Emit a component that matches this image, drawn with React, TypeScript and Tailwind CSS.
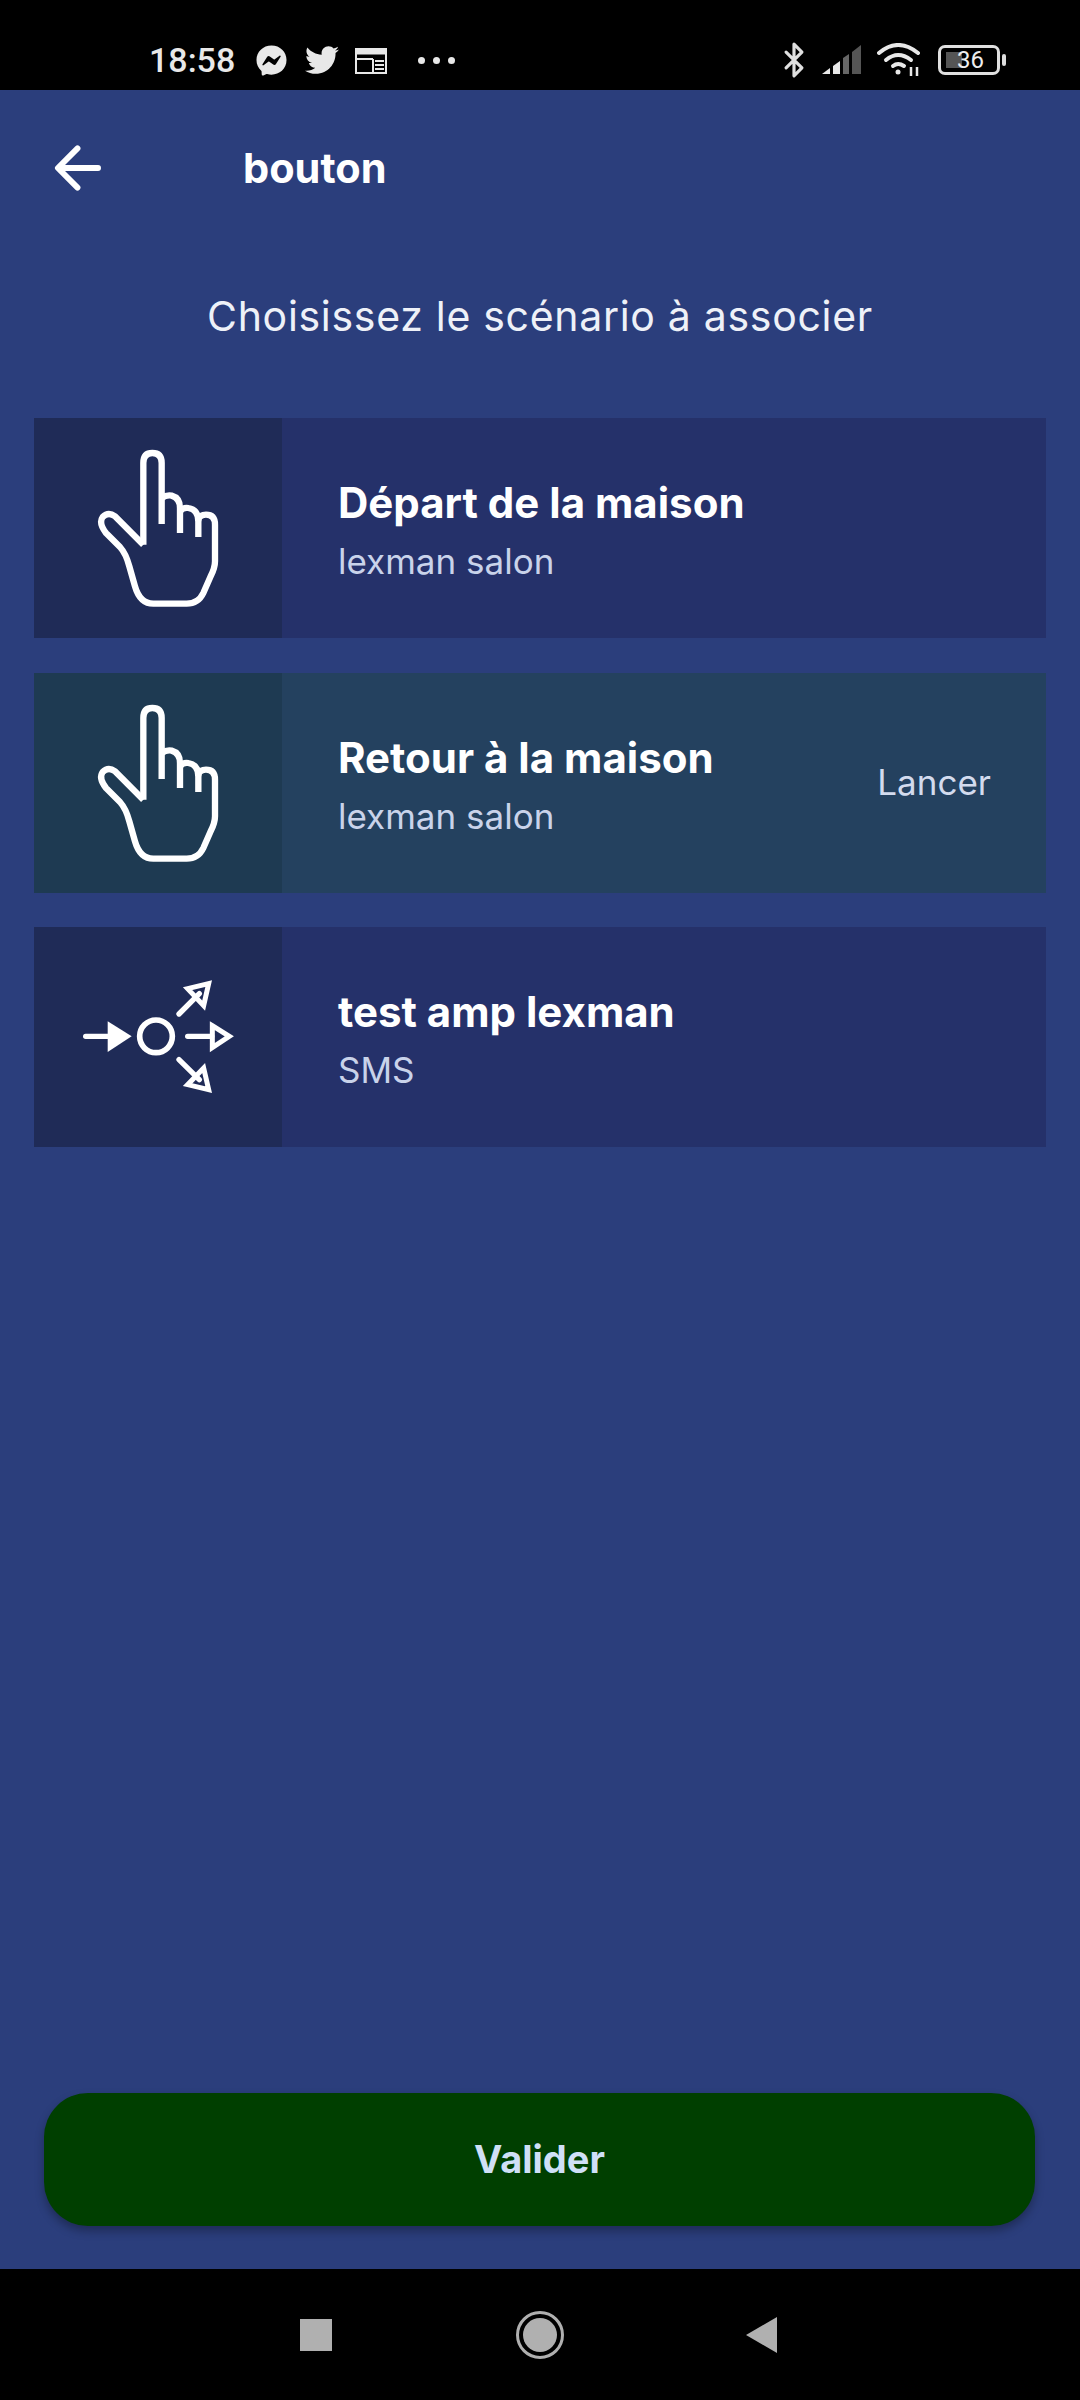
import { Bluetooth } from "lucide-react";
import { FaFacebookMessenger, FaTwitter } from "react-icons/fa";

function HandIcon() {
  return (
    <svg width="248" height="220" viewBox="42 25 744 660" fill="none" stroke="white" strokeWidth="19" strokeLinecap="butt" strokeLinejoin="round">
      <path d="M370 405V160Q370 130 397 130Q425 130 425 160V343" />
      <path d="M370 405L285 320Q265 305 248 322Q235 340 258 370L300 412Q318 432 328 470L345 530Q360 582 400 582H500Q535 582 550 550L572 500Q585 475 585 455V345Q585 315 558 315Q540 315 535 330V382" />
      <path d="M425 265Q440 255 455 258Q480 265 480 295V370" />
      <path d="M480 305Q490 292 505 295Q535 300 535 335" />
    </svg>
  );
}

function SplitIcon() {
  return (
    <svg width="248" height="220" viewBox="42 22 744 660" fill="none" stroke="white" strokeWidth="16" strokeLinecap="round" strokeLinejoin="miter">
      <path d="M197 350H265" />
      <path d="M263 305L335 350L263 397Z" fill="white" stroke="none" />
      <circle cx="408" cy="350" r="49" strokeWidth="17" />
      <path d="M503 350H575" />
      <path d="M577 318L628 350L577 384Z" strokeWidth="15" />
      <path d="M477 283L538 222" />
      <path d="M503 207L566 192L551 258Z" strokeWidth="15" />
      <path d="M477 420L538 480" />
      <path d="M503 495L566 510L551 445Z" strokeWidth="15" />
    </svg>
  );
}

function ScenarioRow({ title, sub, action, selected, icon }: { title: string; sub: string; action?: string; selected?: boolean; icon: React.ReactNode }) {
  return (
    <div className={selected ? "flex h-[220px] bg-[#24415f]" : "flex h-[220px] bg-[#25316a]"}>
      <div className={selected ? "flex w-[248px] items-center justify-center bg-[#1e3a52]" : "flex w-[248px] items-center justify-center bg-[#1f2b57]"}>
        {icon}
      </div>
      <div className="flex flex-1 items-center pl-[56px] pr-[55px]">
        <div className="flex-1 pt-[5px]">
          <div className="text-[42px] leading-[50px] font-bold text-white">{title}</div>
          <div className="mt-[11px] text-[35px] leading-[44px] text-[#c9d3ea]">{sub}</div>
        </div>
        {action && <div className="text-[35px] text-[#d3dbee]">{action}</div>}
      </div>
    </div>
  );
}

export default function App() {
  return (
    <div className="flex h-[2400px] w-[1080px] flex-col bg-[#2b3e7c] font-['Inter',sans-serif]">
      <div className="flex h-[90px] items-center justify-between bg-black pt-[30px] pl-[149px] pr-[74px] font-['Roboto',sans-serif] text-[#e8e8e8]">
        <div className="flex items-center">
          <span className="w-[92px] text-[34px] font-medium">18:58</span>
          <FaFacebookMessenger className="ml-[15px] text-[31px]" />
          <FaTwitter className="ml-[18px] text-[34px]" />
          <svg className="ml-[16px]" width="32" height="28" viewBox="0 0 32 28" fill="none" stroke="#e8e8e8" strokeWidth="2">
            <path d="M1 3H31V27H1Z" />
            <path d="M1 6H31" strokeWidth="5" />
            <path d="M1 13H18M18 13V27M20 15H29M20 19H29M20 23H29" />
          </svg>
          <div className="ml-[31px] flex gap-[8px]">
            <div className="h-[7px] w-[7px] rounded-full bg-[#e8e8e8]" />
            <div className="h-[7px] w-[7px] rounded-full bg-[#e8e8e8]" />
            <div className="h-[7px] w-[7px] rounded-full bg-[#e8e8e8]" />
          </div>
        </div>
        <div className="flex items-center">
          <Bluetooth size={38} strokeWidth={2} className="text-[#e0e0e0]" />
          <svg className="ml-[8px]" width="42" height="32" viewBox="0 0 42 32">
            <path d="M1 30L9 24V30Z" fill="#e8e8e8" />
            <path d="M12 22L19 17V30H12Z" fill="#e8e8e8" />
            <path d="M22 14L28 10V30H22Z" fill="#666" />
            <path d="M31 8L40 1V30H31Z" fill="#555" />
          </svg>
          <svg className="ml-[14px]" width="46" height="34" viewBox="0 0 46 34" fill="none" stroke="#e8e8e8" strokeWidth="4" strokeLinecap="round">
            <path d="M2 10Q21 -6 41 10" />
            <path d="M9 17Q21 7 34 17" />
            <path d="M16 23Q21 19 27 23" />
            <circle cx="21" cy="29" r="2.5" fill="#e8e8e8" stroke="none" />
            <path d="M34 24V33M40 24V33" strokeWidth="2.5" strokeLinecap="butt" />
          </svg>
          <div className="relative ml-[15px] flex h-[30px] w-[62px] items-center rounded-[7px] border-[3px] border-[#e0e0e0] pl-[5px]">
            <div className="h-[16px] w-[16px] bg-[#555]" />
            <span className="absolute left-[16px] text-[24px] leading-[24px] text-[#eee]">36</span>
          </div>
          <div className="ml-[2px] h-[12px] w-[4px] rounded-sm bg-[#ddd]" />
        </div>
      </div>

      <div className="mt-[38px] flex h-[80px] items-center">
        <svg className="ml-[54px]" width="47" height="46" viewBox="0 0 48 46" fill="none" stroke="white" strokeWidth="6" strokeLinecap="round" strokeLinejoin="round">
          <path d="M45 23H5M24 3L4 23L24 43" />
        </svg>
        <h1 className="ml-[142px] text-[41.5px] font-bold text-white">bouton</h1>
      </div>

      <p className="mt-[83px] text-center text-[41px] leading-[50px] tracking-[0.7px] text-[#eef1f8]">Choisissez le scénario à associer</p>

      <div className="mt-[77px] flex flex-col gap-[34.5px] pl-[34px] pr-[34px]">
        <ScenarioRow title="Départ de la maison" sub="lexman salon" icon={<HandIcon />} />
        <ScenarioRow title="Retour à la maison" sub="lexman salon" action="Lancer" selected icon={<HandIcon />} />
        <ScenarioRow title="test amp lexman" sub="SMS" icon={<SplitIcon />} />
      </div>

      <div className="flex-1" />

      <div className="pl-[44px] pr-[45px] pb-[43px]">
        <div className="flex h-[133px] items-center justify-center rounded-[44px] bg-[#003f00] text-[38px] font-bold text-[#cfe0f7] shadow-[0_5px_10px_rgba(0,0,0,0.3)]">
          Valider
        </div>
      </div>

      <div className="flex h-[131px] items-center justify-center bg-black pr-[3px]">
        <div className="h-[32px] w-[32px] bg-[#b0b0b0]" />
        <div className="ml-[184px] flex h-[48px] w-[48px] items-center justify-center rounded-full border-[3px] border-[#b0b0b0]">
          <div className="h-[34px] w-[34px] rounded-full bg-[#b0b0b0]" />
        </div>
        <svg className="ml-[181px]" width="32" height="36" viewBox="0 0 32 36">
          <path d="M32 0V36L1 18Z" fill="#b0b0b0" />
        </svg>
      </div>
    </div>
  );
}
